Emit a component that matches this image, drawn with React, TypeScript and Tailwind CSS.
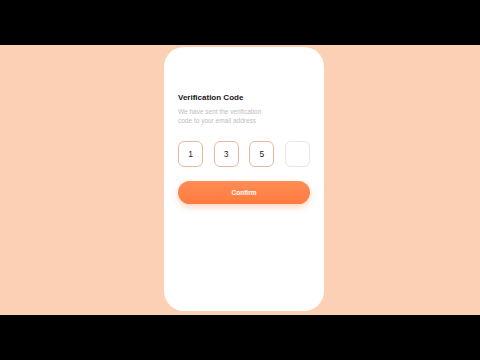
export default function App() {
  const digits = ['1', '3', '5', '']

  return (
    <div className="flex h-[360px] w-[480px] flex-col bg-black font-['Liberation_Sans',Arial,sans-serif]">
      <div className="h-[45px]" />
      <div className="flex h-[270px] justify-center bg-[#fcd0b4] pt-[2px]">
        <div className="ml-[8px] h-[264px] w-[160px] rounded-[20px] bg-white px-[14px] pt-[46px]">
          <h1 className="text-[8px] font-bold leading-[10px] text-[#151515]">Verification Code</h1>
          <p className="mt-[5px] text-[6.5px] leading-[8.5px] text-[#bdbdbd]">
            We have sent the verification
            <br />
            code to your email address
          </p>
          <div className="mt-[16px] flex gap-[10.5px]">
            {digits.map((d, i) => (
              <div
                key={i}
                className={`flex h-[26px] w-[25.5px] items-center justify-center rounded-[6px] border text-[8.5px] text-[#222] ${
                  d ? 'border-[#e9b89e]' : 'border-[#e6e6e6]'
                }`}
              >
                {d}
              </div>
            ))}
          </div>
          <button className="mt-[14px] flex h-[23px] w-full items-center justify-center rounded-full bg-gradient-to-b from-[#ff8d55] to-[#ff7a3f] text-[6.5px] font-bold text-white shadow-[0_3px_6px_rgba(255,130,70,0.35)]">
            Confirm
          </button>
        </div>
      </div>
      <div className="flex-1" />
    </div>
  )
}
